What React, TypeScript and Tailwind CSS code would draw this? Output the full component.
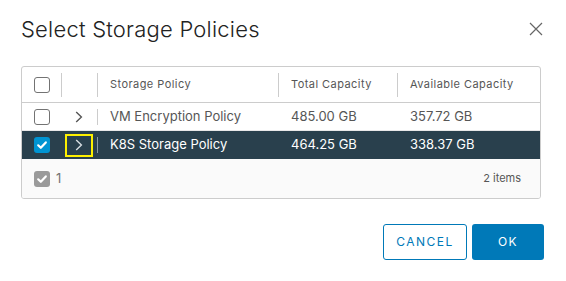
import React from "react";

type Row = {
  name: string;
  total: string;
  available: string;
  selected: boolean;
};

const rows: Row[] = [
  { name: "VM Encryption Policy", total: "485.00 GB", available: "357.72 GB", selected: false },
  { name: "K8S Storage Policy", total: "464.25 GB", available: "338.37 GB", selected: true },
];

const gridCols = "grid grid-cols-[39px_36px_181px_119px_1fr]";

function Check({ className }: { className?: string }) {
  return (
    <svg viewBox="0 0 16 16" className={className} fill="none">
      <path d="M4.2 8.3 6.8 10.8 11.8 5.4" stroke="white" strokeWidth="2.2" strokeLinecap="round" strokeLinejoin="round" />
    </svg>
  );
}

function Box({ checked }: { checked: boolean }) {
  if (checked) {
    return (
      <span className="grid h-4 w-4 place-items-center rounded-[3px] bg-[#0094d2]">
        <Check className="h-4 w-4" />
      </span>
    );
  }
  return <span className="block h-4 w-4 rounded-[3px] border border-[#737373] bg-white" />;
}

function Chevron({ light }: { light: boolean }) {
  return (
    <svg viewBox="0 0 8 12" className="h-[12px] w-[8px]" fill="none">
      <path d="M1.2 1 6.4 6 1.2 11" stroke={light ? "#d6dde1" : "#565656"} strokeWidth="1.4" />
    </svg>
  );
}

function HeadCell({ label }: { label?: string }) {
  return (
    <div className="flex h-full items-center">
      <span className="h-[24px] w-px bg-[#cccccc]" />
      {label ? <span className="ml-3 text-[11px] tracking-[0.04em] text-[#565656]">{label}</span> : null}
    </div>
  );
}

export default function App() {
  return (
    <div className="flex h-[281px] w-[566px] flex-col bg-white font-['Inter','Liberation_Sans',sans-serif]">
      <div className="flex items-center justify-between pl-[21px] pr-[23px] pt-[15px]">
        <h1 className="text-[22px] font-light leading-[28px] tracking-[0.01em] text-[#222222]">Select Storage Policies</h1>
        <svg viewBox="0 0 14 14" className="h-[14px] w-[14px]" fill="none">
          <path d="M1 1 13 13M13 1 1 13" stroke="#666666" strokeWidth="1.2" />
        </svg>
      </div>

      <div className="ml-[21px] mt-[23px] w-[520px] overflow-hidden rounded-[3px] border border-[#cccccc]">
        <div className={`${gridCols} h-[36px] border-b border-[#cccccc]`}>
          <div className="flex items-center justify-center pl-px">
            <Box checked={false} />
          </div>
          <HeadCell />
          <HeadCell label="Storage Policy" />
          <HeadCell label="Total Capacity" />
          <HeadCell label="Available Capacity" />
        </div>

        {rows.map((row) => (
          <div
            key={row.name}
            className={`${gridCols} h-[28px] text-[13px] ${
              row.selected ? "bg-[#29404d] text-white" : "border-b border-[#e8e8e8] text-[#565656]"
            }`}
          >
            <div className="flex items-center justify-center pl-px">
              <Box checked={row.selected} />
            </div>
            <div className="flex items-center justify-center">
              {row.selected ? (
                <span className="grid h-[23px] w-[28px] place-items-center border-2 border-[#fdf000]">
                  <Chevron light />
                </span>
              ) : (
                <Chevron light={false} />
              )}
            </div>
            <div className="flex items-center">
              <span className={`h-[16px] w-px ${row.selected ? "bg-[#8a9aa3]" : "bg-[#cccccc]"}`} />
              <span className="ml-3">{row.name}</span>
            </div>
            <div className="flex items-center pl-[13px]">{row.total}</div>
            <div className="flex items-center pl-[13px]">{row.available}</div>
          </div>
        ))}

        <div className="flex h-[39px] items-center justify-between bg-[#fafafa] pl-[12px] pr-[19px] text-[11px] text-[#565656]">
          <div className="flex items-center gap-[6px]">
            <span className="grid h-4 w-4 place-items-center rounded-[3px] bg-[#9a9a9a]">
              <Check className="h-4 w-4" />
            </span>
            <span className="text-[13px] text-[#737373]">1</span>
          </div>
          <span>2 items</span>
        </div>
      </div>

      <div className="mt-[25px] flex justify-end gap-[5px] pr-[22px]">
        <button className="h-[36px] w-[84px] rounded-[3px] border border-[#0079b8] bg-white text-[12px] tracking-[0.12em] text-[#0079b8]">
          CANCEL
        </button>
        <button className="h-[36px] w-[72px] rounded-[3px] bg-[#0079b8] text-[12px] tracking-[0.12em] text-white">
          OK
        </button>
      </div>
    </div>
  );
}
